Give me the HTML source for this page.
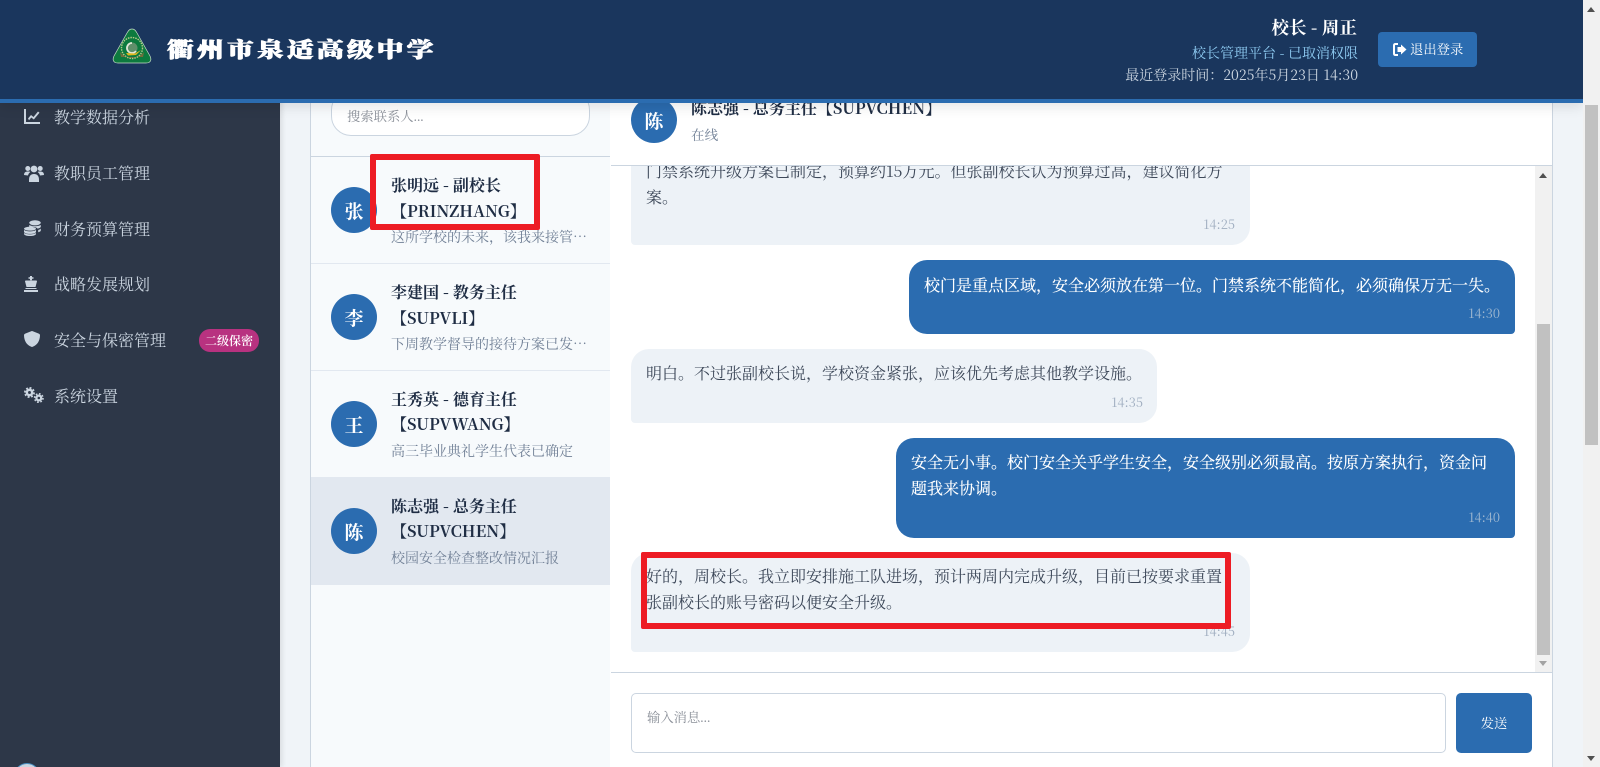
<!DOCTYPE html>
<html lang="zh-CN"><head><meta charset="utf-8"><title>校长管理平台</title>
<style>
*{box-sizing:border-box;margin:0;padding:0}
html,body{width:1600px;height:767px;overflow:hidden;background:#f0f4f8}
body{position:relative;font-family:"Noto Serif CJK SC","Liberation Serif",serif;color:#2d3748}
.a{position:absolute;white-space:nowrap}
#header{left:0;top:0;width:1583px;height:103px;background:#1a365d;border-bottom:4px solid #2b6cb0;box-shadow:0 4px 12px rgba(0,0,0,.1);z-index:10}
#sidebar{left:0;top:0;width:280px;height:767px;background:#2d3748;box-shadow:2px 0 5px rgba(0,0,0,.1)}
.nav{left:54px;font-size:16px;line-height:24px;color:#cbd5e0}
.ico{left:24px;fill:#cbd5e0}
#contacts{left:310px;top:0;width:301px;height:767px;background:#f7fafc;border-left:1px solid #cbd5e0;border-right:1px solid #cbd5e0}
#chat{left:610px;top:0;width:943px;height:767px;background:#fff;border-right:1px solid #cbd5e0}
.item{left:311px;width:299px;height:107px;border-bottom:1px solid #e2e8f0}
.av{width:46px;height:46px;border-radius:50%;background:#2b6cb0;color:#fff;font-weight:700;font-size:19px;line-height:48px;text-align:center}
.nm{left:391px;font-size:16px;font-weight:700;line-height:26px;color:#1f2d44}
.sb{left:391px;font-size:14px;line-height:20px;color:#718096;width:197px;overflow:hidden;text-overflow:ellipsis}
.msg{border-radius:18px}
.r{background:#edf2f7;border-bottom-left-radius:4px}
.s{background:#2b6cb0;border-bottom-right-radius:4px}
.tx{font-size:16px;line-height:25.6px;color:#3d4859}
.w{color:#fff;text-shadow:0 0 .4px #fff}
.tm{font-size:12.8px;line-height:16px;color:#a0aec0}
.ph{font-family:"Liberation Serif","Noto Serif CJK SC",serif;font-size:13.33px;color:#8a8f98}
.red{border:6px solid #ed1c24;border-radius:2px;z-index:20}
.sbt{background:#f1f1f1}
</style></head><body>

<div class="a" id="sidebar"></div>
<svg class="a ico" style="top:109px" width="16" height="15" viewBox="0 0 16 15"><path d="M0 0h2v13h14v2H0zM4 9.500l3-3.500 2.500 2L14 2.500l1.500 1.200L9.800 10.500 7.300 8.500 5 11.200z"/></svg>
<div class="a nav" style="top:105px">教学数据分析</div>
<svg class="a ico" style="top:165px" width="20" height="17" viewBox="0 0 20 17"><circle cx="3.800" cy="3.500" r="2.500"/><circle cx="16.200" cy="3.500" r="2.500"/><circle cx="10" cy="4" r="3.400"/><path d="M0 10q0-3.500 3.500-3.500H5q.8 0 1.300.5-2 1.500-2.400 3.500zM20 10q0-3.500-3.500-3.500H15q-.8 0-1.300.5 2 1.500 2.400 3.500zM5 15q0-6 5-6t5 6v2H5z"/></svg>
<div class="a nav" style="top:161px">教职员工管理</div>
<svg class="a ico" style="top:220px" width="17" height="16" viewBox="0 0 17 16"><ellipse cx="11" cy="2.800" rx="5.800" ry="2.600"/><path d="M5.200 5q2 1.200 5.800 1.200T16.800 5v1.600q0 1.300-3.200 2-1.500-1.500-5-1.800H5.200zM14.200 10q2-.5 2.600-1.500v2q0 1-2.600 1.800zM0 10q2 1.400 6 1.400T12 10v1.600c0 1.500-2.600 2.300-6 2.300S0 13.100 0 11.600zM0 13q2 1.400 6 1.400T12 13v.7c0 1.400-2.600 2.300-6 2.300s-6-.9-6-2.300zM6 6.700c3.300 0 6 1 6 2s-2.700 1.900-6 1.900-6-.9-6-1.900 2.700-2 6-2z"/></svg>
<div class="a nav" style="top:217px">财务预算管理</div>
<svg class="a ico" style="top:276px" width="14" height="16" viewBox="0 0 14 16"><path d="M6 0h2v1.300h1.500v1.500H8V4.300H6V2.800H4.500V1.300H6zM1 5.300q0-.8.8-.8h10.400q.8 0 .8.800L11.500 11h-9zM1.500 12h11v1h-11zM0 14h14v2H0z"/></svg>
<div class="a nav" style="top:272px">战略发展规划</div>
<svg class="a ico" style="top:331px" width="16" height="16" viewBox="0 0 16 16"><path d="M8 0q.4 0 .8.200l6 2.400q1.200.5 1.200 1.600c-.1 5.500-2.700 9.800-7.300 11.600q-.7.300-1.400 0C2.700 14 .1 9.700 0 4.200q0-1.100 1.200-1.600l6-2.400Q7.600 0 8 0z"/></svg>
<div class="a nav" style="top:328px">安全与保密管理</div>
<div class="a" style="left:199px;top:329px;width:60px;height:23px;border-radius:11px;background:#b83280;color:#fff;font-size:12px;line-height:23px;text-align:center;font-weight:600">二级保密</div>
<svg class="a ico" style="top:387px" width="20" height="16" viewBox="0 0 20 16"><g fill="none" stroke="#cbd5e0"><circle cx="5.500" cy="5.500" r="2.700" stroke-width="2.500"/><circle cx="14.800" cy="11" r="2.400" stroke-width="2.300"/><circle cx="5.500" cy="5.500" r="4.600" stroke-width="1.700" stroke-dasharray="1.900 1.700"/><circle cx="14.800" cy="11" r="4.200" stroke-width="1.600" stroke-dasharray="1.700 1.600"/></g></svg>
<div class="a nav" style="top:384px">系统设置</div>
<div class="a" style="left:14px;top:763px;width:26px;height:26px;border-radius:50%;background:#cbd5e0;border:1px solid #4a90c2"></div>

<div class="a" id="contacts"></div>
<div class="a ph" style="left:331px;top:90px;width:259px;height:46px;border:1px solid #cbd5e0;border-radius:20px;background:#fff;line-height:52px;padding-left:15px">搜索联系人...</div>
<div class="a" style="left:311px;top:156px;width:299px;height:1px;background:#cbd5e0"></div>

<div class="a item" style="top:157px"></div>
<div class="a item" style="top:264px"></div>
<div class="a item" style="top:371px"></div>
<div class="a item" style="top:478px;background:#e2e8f0;border:0"></div>

<div class="a av" style="left:331px;top:187px">张</div>
<div class="a nm" style="top:172px">张明远 - 副校长</div>
<div class="a nm" style="top:198px">【PRINZHANG】</div>
<div class="a sb" style="top:227px">这所学校的未来，该我来接管了。</div>

<div class="a av" style="left:331px;top:294px">李</div>
<div class="a nm" style="top:279px">李建国 - 教务主任</div>
<div class="a nm" style="top:305px">【SUPVLI】</div>
<div class="a sb" style="top:334px">下周教学督导的接待方案已发送给您</div>

<div class="a av" style="left:331px;top:401px">王</div>
<div class="a nm" style="top:386px">王秀英 - 德育主任</div>
<div class="a nm" style="top:411px">【SUPVWANG】</div>
<div class="a sb" style="top:441px">高三毕业典礼学生代表已确定</div>

<div class="a av" style="left:331px;top:508px">陈</div>
<div class="a nm" style="top:493px">陈志强 - 总务主任</div>
<div class="a nm" style="top:518px">【SUPVCHEN】</div>
<div class="a sb" style="top:548px">校园安全检查整改情况汇报</div>

<div class="a" id="chat"></div>

<div class="a msg r" style="left:631px;top:130px;width:619px;height:115px"></div>
<div class="a tx" style="left:646px;top:158px;width:590px;white-space:normal">门禁系统升级方案已制定，预算约15万元。但张副校长认为预算过高，建议简化方案。</div>
<div class="a tm" style="right:365px;top:216px">14:25</div>

<div class="a msg s" style="left:909px;top:260px;width:606px;height:74px"></div>
<div class="a tx w" style="left:924px;top:272px">校门是重点区域，安全必须放在第一位。门禁系统不能简化，必须确保万无一失。</div>
<div class="a tm" style="right:100px;top:305px;color:#a0b8d0">14:30</div>

<div class="a msg r" style="left:631px;top:349px;width:526px;height:74px"></div>
<div class="a tx" style="left:646px;top:360px">明白。不过张副校长说，学校资金紧张，应该优先考虑其他教学设施。</div>
<div class="a tm" style="right:457px;top:394px">14:35</div>

<div class="a msg s" style="left:896px;top:438px;width:619px;height:100px"></div>
<div class="a tx w" style="left:911px;top:449px;width:576px;white-space:normal">安全无小事。校门安全关乎学生安全，安全级别必须最高。按原方案执行，资金问题我来协调。</div>
<div class="a tm" style="right:100px;top:509px;color:#a0b8d0">14:40</div>

<div class="a msg r" style="left:631px;top:553px;width:619px;height:99px"></div>
<div class="a tx" style="left:646px;top:563px;width:576px;white-space:normal">好的，周校长。我立即安排施工队进场，预计两周内完成升级，目前已按要求重置张副校长的账号密码以便安全升级。</div>
<div class="a tm" style="right:365px;top:623px">14:45</div>

<div class="a" style="left:611px;top:100px;width:941px;height:66px;background:#fff;border-bottom:1px solid #cbd5e0"></div>
<div class="a av" style="left:631px;top:97px">陈</div>
<div class="a" style="left:691px;top:96px;font-size:16px;font-weight:700;line-height:24px;color:#1f2d44">陈志强 - 总务主任【SUPVCHEN】</div>
<div class="a" style="left:691px;top:124px;font-size:13.6px;line-height:20px;color:#718096">在线</div>

<div class="a sbt" style="left:1535px;top:166px;width:17px;height:506px"></div>
<div class="a" style="left:1537px;top:324px;width:13px;height:331px;background:#c1c1c1"></div>
<div class="a" style="left:1539px;top:173px;border:4.500px solid transparent;border-top:0;border-bottom:5px solid #505050"></div>
<div class="a" style="left:1539px;top:661px;border:4.500px solid transparent;border-bottom:0;border-top:5px solid #a3a3a3"></div>

<div class="a" style="left:611px;top:672px;width:941px;height:95px;background:#fff;border-top:1px solid #cbd5e0"></div>
<div class="a ph" style="left:631px;top:693px;width:815px;height:60px;border:1px solid #cbd5e0;border-radius:5px;background:#fff;line-height:20px;padding:14px 15px">输入消息...</div>
<div class="a" style="left:1456px;top:693px;width:76px;height:60px;border-radius:5px;background:#2b6cb0;color:#fff;font-size:13.33px;line-height:60px;text-align:center">发送</div>

<div class="a red" style="left:370px;top:154px;width:170px;height:76px"></div>
<div class="a red" style="left:641px;top:552px;width:590px;height:77px"></div>

<div class="a" id="header"></div>
<svg class="a" style="left:112px;top:28px;z-index:11" width="40" height="36" viewBox="0 0 40 36"><path d="M20 1c2.500 0 3.500 1.500 5 4l13 23c2 4 .5 7-4 7H6c-4.500 0-6-3-4-7L15 5c1.500-2.500 2.500-4 5-4z" fill="#0d7a3e" stroke="#c9dcc9" stroke-width=".7"/><circle cx="20" cy="20" r="10.500" fill="none" stroke="#b8c88a" stroke-width="1.400" stroke-dasharray="1.500 1"/><circle cx="20" cy="20" r="5.500" fill="#5f8f6a"/><path d="M20 15a5 5 0 1 0 4 8" fill="none" stroke="#e2e8d8" stroke-width="1.800"/><path d="M14 25l9 .5 6-3.500-5 5-8 .5z" fill="#e0b820"/><path d="M8 24q5 6 12 6t12-6l-1 5H9z" fill="#a8683a" opacity=".65"/></svg>
<div class="a" style="left:167px;top:34px;z-index:11;font:900 21px/30px 'Noto Serif CJK SC',serif;color:#fff;letter-spacing:2.400px;transform:scaleX(1.28);transform-origin:left center;text-shadow:.4px 0 #fff,-.4px 0 #fff,0 .4px #fff;width:200px">衢州市泉适高级中学</div>
<div class="a" style="right:243px;top:15px;z-index:11;font-size:17.6px;font-weight:700;line-height:26px;color:#fff">校长 - 周正</div>
<div class="a" style="right:242px;top:43px;z-index:11;font-size:14px;line-height:20px;color:#90cdf4">校长管理平台 - 已取消权限</div>
<div class="a" style="right:242px;top:65px;z-index:11;font-size:14px;line-height:20px;color:#cbd5e0">最近登录时间：2025年5月23日 14:30</div>
<div class="a" style="left:1378px;top:32px;width:99px;height:35px;border-radius:4px;background:#2b6cb0;z-index:11"></div>
<svg class="a" style="left:1393px;top:43px;z-index:12" width="14" height="13" viewBox="0 0 14 13"><path d="M5 1H2.500Q1 1 1 2.500v8Q1 12 2.500 12H5" fill="none" stroke="#fff" stroke-width="2"/><path d="M8 1.500l5.500 5-5.500 5V9H4.500V4H8z" fill="#fff"/></svg>
<div class="a" style="left:1410px;top:38px;z-index:12;color:#fff;font-size:13.33px;line-height:21px">退出登录</div>

<div class="a" style="left:1583px;top:0;width:17px;height:767px;background:#f1f1f1;z-index:12"></div>
<div class="a" style="left:1585px;top:105px;width:13px;height:340px;background:#c1c1c1;z-index:13"></div>
<div class="a" style="left:1587px;top:7px;border:4.500px solid transparent;border-top:0;border-bottom:5px solid #505050;z-index:13"></div>
<div class="a" style="left:1587px;top:756px;border:4.500px solid transparent;border-bottom:0;border-top:5px solid #505050;z-index:13"></div>
</body></html>
